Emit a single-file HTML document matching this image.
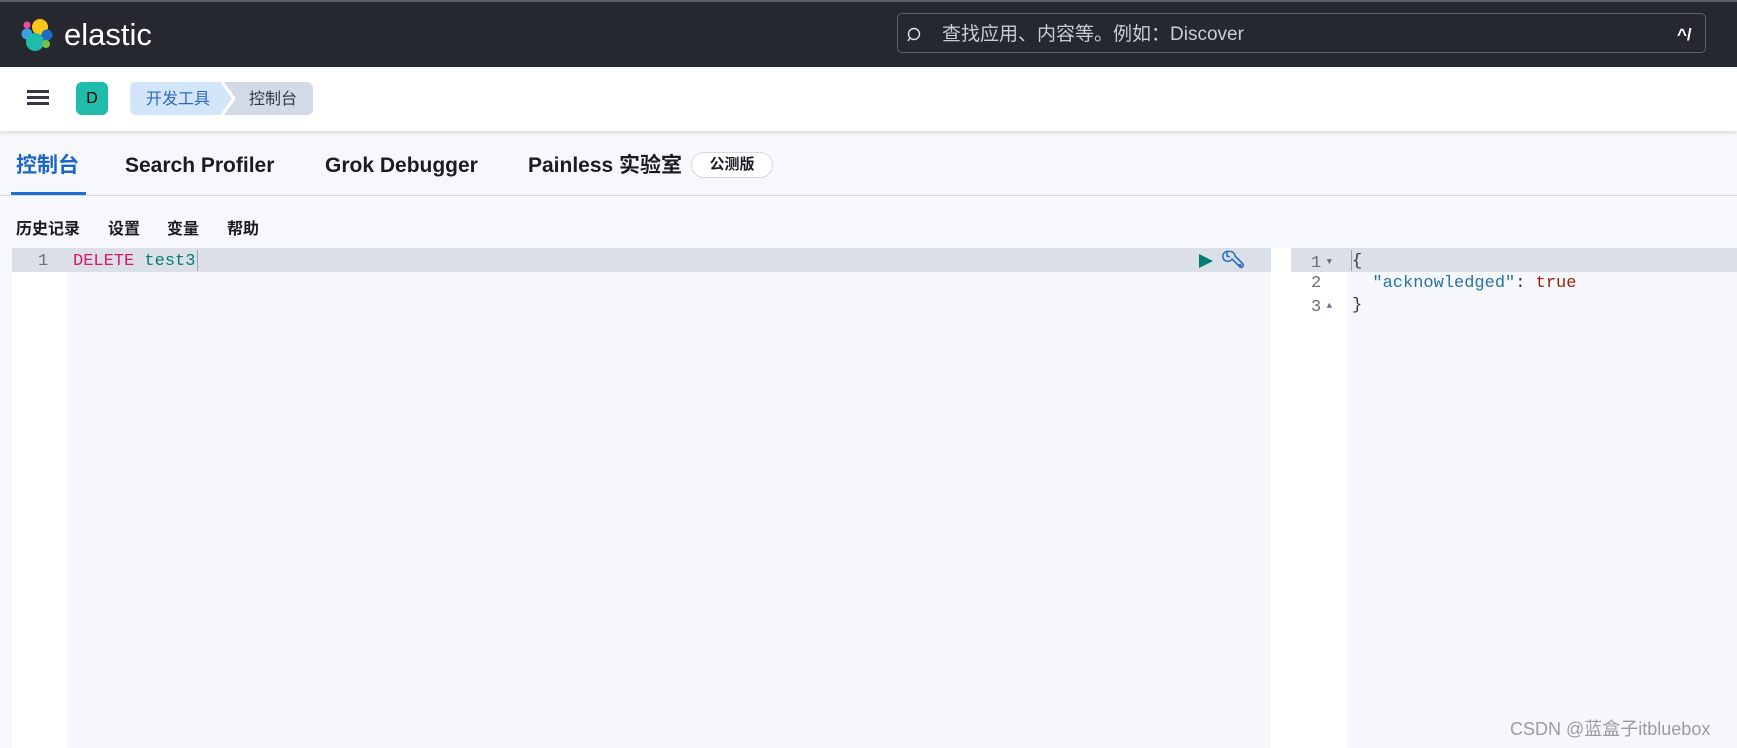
<!DOCTYPE html>
<html><head><meta charset="utf-8"><style>
*{margin:0;padding:0;box-sizing:border-box}
body{width:1737px;height:748px;overflow:hidden;background:#f7f8fc;font-family:"Liberation Sans","Noto Sans CJK SC",sans-serif;position:relative}
.a{position:absolute}
#hdr{left:0;top:0;width:1737px;height:67px;background:#25282f;border-top:2px solid #5c5f66}
#bar{left:0;top:67px;width:1737px;height:64px;background:#fff;box-shadow:0 2px 4px rgba(0,0,0,.12)}
.tab{top:152px;font-size:21px;font-weight:bold;color:#1a1c21;line-height:28px}
.menu{top:220px;font-size:16px;font-weight:bold;color:#1a1c21;line-height:20px}
.mono{font-family:"Liberation Mono",monospace;font-size:17px;line-height:22px;white-space:pre}
</style></head><body>
<div id="hdr" class="a">
 <svg class="a" style="left:21px;top:16px" width="32" height="34" viewBox="0 0 32 34">
  <circle cx="19" cy="9" r="8" fill="#fec514"/>
  <circle cx="6" cy="7" r="3.5" fill="#f04e98"/>
  <circle cx="6" cy="16" r="5.5" fill="#3f9ce6"/>
  <circle cx="26" cy="17" r="5.5" fill="#1a6ec8"/>
  <circle cx="14" cy="24" r="9" fill="#1fbcab"/>
  <circle cx="25" cy="26" r="4" fill="#7cc143"/>
 </svg>
 <div class="a" style="left:64px;top:14px;font-size:31px;color:#fff;line-height:38px">elastic</div>
 <div class="a" style="left:897px;top:11px;width:809px;height:40px;border:1px solid #5d6067;border-radius:5px"></div>
 <svg class="a" style="left:906px;top:25px" width="16" height="16" viewBox="0 0 16 16"><circle cx="8" cy="7" r="5.5" fill="none" stroke="#dfe3ea" stroke-width="1.4"/><path d="M4 11 L2 14" stroke="#dfe3ea" stroke-width="1.4"/></svg>
 <div class="a" style="left:942px;top:21px;font-size:19px;color:#c9ccd1;line-height:24px">查找应用、内容等。例如：Discover</div>
 <div class="a" style="left:1677px;top:22px;font-size:17px;font-weight:bold;color:#fff;line-height:22px">^/</div>
</div>
<div id="bar" class="a">
 <div class="a" style="left:27px;top:23px;width:22px;height:3px;background:#343741"></div>
 <div class="a" style="left:27px;top:29px;width:22px;height:3px;background:#343741"></div>
 <div class="a" style="left:27px;top:35px;width:22px;height:3px;background:#343741"></div>
 <div class="a" style="left:76px;top:15px;width:32px;height:33px;background:#1fbcab;border-radius:6px;text-align:center;font-size:16px;line-height:33px;color:#000">D</div>
 <div class="a" style="left:219px;top:15px;width:94px;height:33px;background:#d3dae6;border-radius:0 6px 6px 0"></div>
 <div class="a" style="left:249px;top:16px;font-size:16px;color:#343741;line-height:33px">控制台</div>
 <svg class="a" style="left:130px;top:15px" width="105" height="33"><path d="M6 0 H92 L104 16.5 L92 33 H6 Q0 33 0 27 V6 Q0 0 6 0Z" fill="#d3e5f8"/><path d="M92 0 L104 16.5 L92 33" fill="none" stroke="#fff" stroke-width="3"/></svg>
 <div class="a" style="left:146px;top:16px;font-size:16px;color:#2e6bbf;line-height:33px">开发工具</div>
</div>
<div class="a tab" style="left:16px;color:#1c67c6">控制台</div>
<div class="a" style="left:11px;top:192px;width:75px;height:3px;background:#1f6fd0"></div>
<div class="a tab" style="left:125px">Search Profiler</div>
<div class="a tab" style="left:325px">Grok Debugger</div>
<div class="a tab" style="left:528px">Painless 实验室</div>
<div class="a" style="left:691px;top:152px;width:82px;height:26px;border:1px solid #d3dae6;border-radius:13px;background:#fff;text-align:center;font-size:15px;font-weight:bold;line-height:24px;color:#1a1c21">公测版</div>
<div class="a" style="left:0;top:195px;width:1737px;height:1px;background:#d3dae6"></div>
<div class="a menu" style="left:16px">历史记录</div>
<div class="a menu" style="left:108px">设置</div>
<div class="a menu" style="left:167px">变量</div>
<div class="a menu" style="left:227px">帮助</div>
<!-- left editor -->
<div class="a" style="left:12px;top:248px;width:1259px;height:500px;background:#f5f7fa"></div>
<div class="a" style="left:12px;top:248px;width:55px;height:500px;background:#fff"></div>
<div class="a" style="left:12px;top:248px;width:1259px;height:24px;background:#dbe0e8"></div>
<div class="a mono" style="left:38px;top:251px;color:#69707d">1</div>
<div class="a mono" style="left:73px;top:251px"><span style="color:#d6196d">DELETE</span> <span style="color:#017d73">test3</span></div>
<div class="a" style="left:197px;top:250px;width:1px;height:21px;background:#98a2b3"></div>
<svg class="a" style="left:1198px;top:253px" width="16" height="16"><path d="M1 1 L15 8 L1 15Z" fill="#017d73"/></svg>
<svg class="a" style="left:1221px;top:250px" width="24" height="21" viewBox="0 0 24 21" fill="none" stroke="#2d70c4" stroke-width="1.6"><path d="M8 1.5 A5 5 0 1 0 11 9 L19 17 A2.2 2.2 0 0 0 22 14 L14 6 A5 5 0 0 0 8 1.5 M6 2 L6 6 L9 7"/><circle cx="19" cy="15.5" r="0.9" fill="#2d70c4"/></svg>
<!-- right -->
<div class="a" style="left:1271px;top:248px;width:20px;height:500px;background:#fff"></div>
<div class="a" style="left:1291px;top:248px;width:446px;height:500px;background:#f5f7fa;border-left:1px solid #e4e8ee"></div>
<div class="a" style="left:1291px;top:248px;width:56px;height:500px;background:#fff"></div>
<div class="a" style="left:1291px;top:248px;width:446px;height:24px;background:#dbe0e8"></div>
<div class="a mono" style="left:1311px;top:251px;color:#69707d">1<span style="font-size:9px;vertical-align:3px"> ▼</span></div>
<div class="a mono" style="left:1311px;top:273px;color:#69707d">2</div>
<div class="a mono" style="left:1311px;top:295px;color:#69707d">3<span style="font-size:9px;vertical-align:3px"> ▲</span></div>
<div class="a mono" style="left:1352px;top:251px;color:#343741">{</div>
<div class="a" style="left:1351px;top:250px;width:1px;height:21px;background:#98a2b3"></div>
<div class="a mono" style="left:1352px;top:273px;color:#343741">  <span style="color:#2674a6">"acknowledged"</span>: <span style="color:#9b1f05">true</span></div>
<div class="a mono" style="left:1352px;top:295px;color:#343741">}</div>
<div class="a" style="left:1510px;top:718px;font-size:18px;color:#9a9ca0;line-height:22px">CSDN @蓝盒子itbluebox</div>
</body></html>
